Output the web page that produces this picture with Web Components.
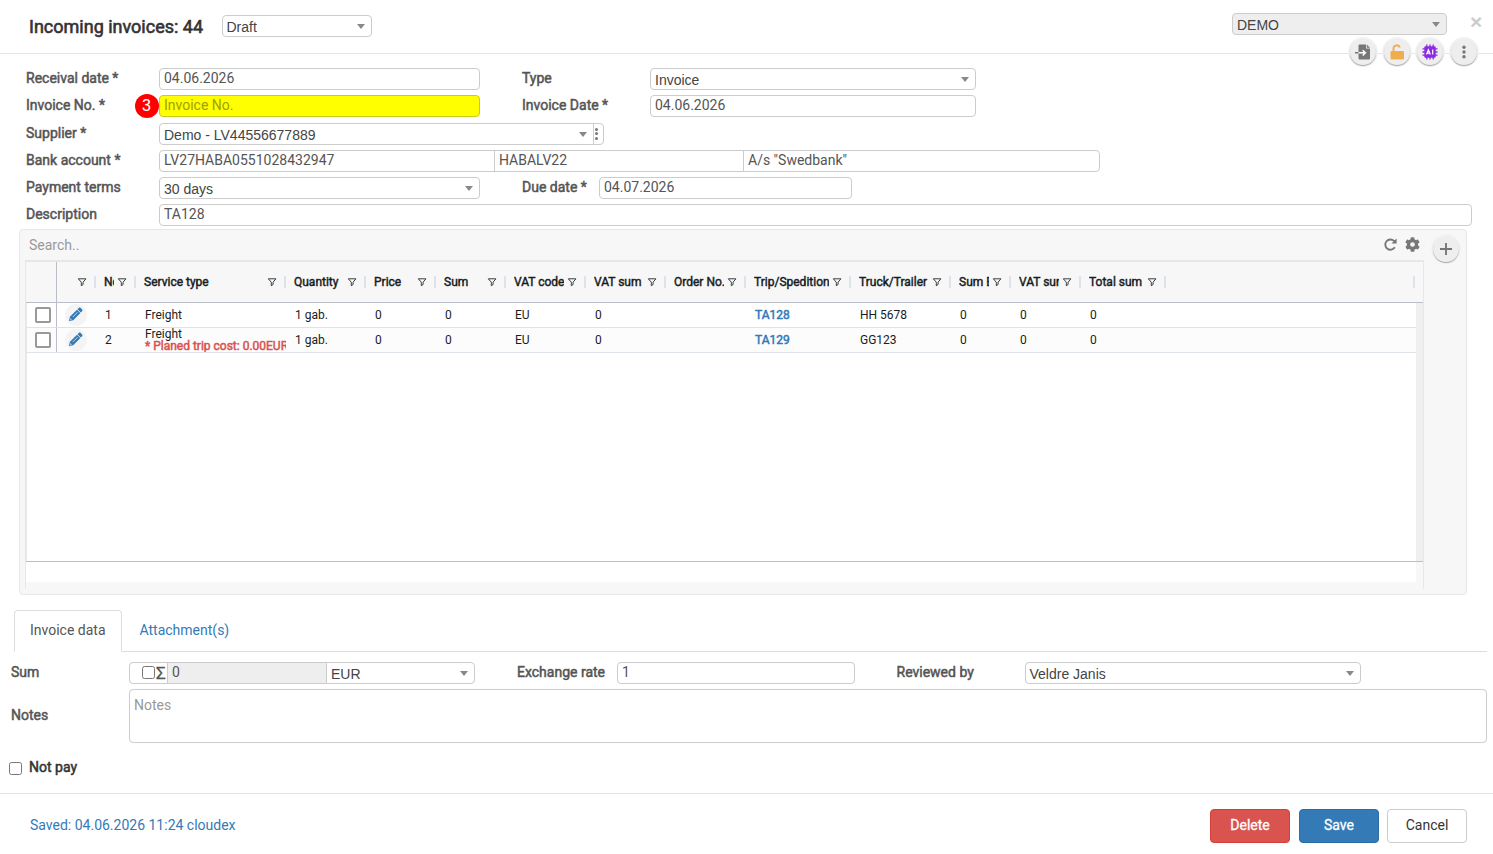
<!DOCTYPE html>
<html lang="en">
<head>
<meta charset="utf-8">
<title>Incoming invoices</title>
<style>
    body{
        margin: 0;
        background: #fff;
        color: #555;
        font: 14px/20px Roboto, "Liberation Sans", sans-serif;
    }
</style>
</head>
<body>
<invoice-page></invoice-page>

<script>
const define = (name, html, setup) => {
    customElements.define(name, class extends HTMLElement{
        constructor(){
            super();
            this.$ = this.attachShadow({mode: 'open'});
            this.$.innerHTML = html;
        }

        connectedCallback(){
            if(setup) setup(this, this.$)
        }
    })
}

const icons = {
    import: ['0 0 18 18', `<path fill="#777" d="M5.500 1.500H12V5.500h4V15.500a1 1 0 0 1-1 1H5.500a1 1 0 0 1-1-1v-13a1 1 0 0 1 1-1z"/><path fill="#777" d="M12.800 1.500l3.200 3.200h-3.200zM1 9.100h4v1.500H1z"/><path fill="none" stroke="#fff" stroke-width="1.500" d="M4.500 9.850h6.500M8.700 7.200l2.700 2.650-2.700 2.650"/>`],
    unlock: ['0 0 18 18', `<rect x="2.500" y="8" width="13.500" height="8.500" rx="1.300" fill="#f0ad4e"/><path fill="none" stroke="#f0ad4e" stroke-width="1.900" d="M5.500 9V5.600a3.300 3.300 0 0 1 6.400-1.100"/>`],
    ai: ['0 0 18 18', `<path stroke="#8a2be2" stroke-width="1.300" d="M5.800 1.500v15M9 1.500v15M12.200 1.500v15M1.500 5.800h15M1.500 9h15M1.500 12.200h15"/><rect x="3.300" y="3.300" width="11.400" height="11.400" rx="1.300" fill="#8a2be2"/><path fill="none" stroke="#fff" stroke-width="1.200" d="M5.500 11.500l1.900-4.700 1.900 4.700M6.200 10.200h2.400M11.700 6.500v5"/>`],
    dots: ['0 0 18 18', `<g fill="#777"><circle cx="9" cy="4.300" r="1.700"/><circle cx="9" cy="9" r="1.700"/><circle cx="9" cy="13.700" r="1.700"/></g>`],
    plus: ['0 0 18 18', `<path stroke="#777" stroke-width="1.900" d="M9 3v12M3 9h12"/>`],
    refresh: ['0 0 16 16', `<path fill="none" stroke="#777" stroke-width="2" d="M12.600 11A5.500 5.500 0 1 1 11.800 4.200L13 5.400"/><path fill="#777" d="M14.500 1.500v5.500H9z"/>`],
    gear: ['0 0 512 512', `<path fill="#777" d="M487 315l-43-25a192 192 0 0 0 0-69l43-25c5-3 7-9 6-14a250 250 0 0 0-55-95c-4-4-10-5-15-2l-43 24a190 190 0 0 0-60-34V26c0-6-4-11-10-12a250 250 0 0 0-110 0c-5 1-9 6-9 12v50a195 195 0 0 0-60 34L89 85c-5-3-11-2-15 2a249 249 0 0 0-55 95c-2 5 1 11 5 14l43 25a194 194 0 0 0 0 69l-43 25c-4 3-7 9-5 14a250 250 0 0 0 55 95c4 4 10 5 15 2l43-24a190 190 0 0 0 60 34v50c0 6 4 11 9 12a251 251 0 0 0 110 0c6-1 10-6 10-12v-50a195 195 0 0 0 60-34l43 25c5 2 11 2 15-3a249 249 0 0 0 55-95c1-5-1-11-7-14zM256 336a80 80 0 1 1 0-160 80 80 0 0 1 0 160z"/>`],
    pencil: ['0 0 16 16', `<path fill="#337ab7" d="M1 15l1-4.600 7.600-7.600 3.600 3.600L5.600 14z"/><path fill="#337ab7" d="M10.100 2.300l1.300-1.300c.7-.6 1.500-.5 2.100.1l1.400 1.400c.6.6.7 1.500.1 2.100l-1.300 1.300z"/><path stroke="#fff" stroke-width=".7" d="M5 10.800l5.200-5.200"/><path fill="#fff" d="M2.700 11.900l1.400 1.400-1.200.4-.6-.6z"/>`],
    filter: ['0 0 10 10', `<path fill="none" stroke="#181d1f" stroke-width=".85" d="M1.300 1.800h7.600L6.100 5.200v2.300L4.300 8.700V5.200z"/>`]
}

define('app-icon', `
    <style>
        :host{ display: block; width: 18px; height: 18px; flex: none; }
        svg{ display: block; width: 100%; height: 100%; }
    </style>
    <svg></svg>
`, (el, $) => {
    const [box, body] = icons[el.getAttribute('name')]
    const svg = $.querySelector('svg')
    svg.setAttribute('viewBox', box)
    svg.innerHTML = body
})

define('field-label', `
    <style>
        :host{
            display: block;
            line-height: 20px;
            white-space: nowrap;
            -webkit-text-stroke: .5px currentColor;
        }
    </style>
    <slot></slot>
`)

define('text-field', `
    <style>
        :host{
            display: block;
            box-sizing: border-box;
            height: 22px;
            border: 1px solid #ccc;
            border-radius: 4px;
            padding: 0 4px;
            line-height: 18px;
            white-space: nowrap;
            background: #fff;
        }
        :host([yellow]){ background: #ff0; border-color: #cccc1c; color: #a0a000; }
        :host([disabled]){ background: #eee; }
        :host([area]){ height: 54px; padding-top: 6px; color: #999; }
        :host([first]){ border-radius: 4px 0 0 4px; }
        :host([mid]){ border-radius: 0; margin-left: -1px; }
        :host([last]){ border-radius: 0 4px 4px 0; margin-left: -1px; }
    </style>
    <slot></slot>
`)

define('select-field', `
    <style>
        :host{
            display: flex;
            box-sizing: border-box;
            height: 22px;
            border: 1px solid #ccc;
            border-radius: 4px;
            padding: 1px 6px 0 4px;
            align-items: center;
            justify-content: space-between;
            font: 14px/20px "Liberation Sans", Arial, sans-serif;
            color: #444;
            background: #fff;
            white-space: nowrap;
        }
        :host([disabled]){ background: #eee; }
        :host([first]){ border-radius: 4px 0 0 4px; }
        :host([last]){ border-radius: 0 4px 4px 0; margin-left: -1px; }
        i{
            border: 4px solid transparent;
            border-top: 5px solid #888;
            border-bottom: 0;
            margin-bottom: 1px;
        }
    </style>
    <span><slot></slot></span><i></i>
`)

define('check-box', `
    <style>
        :host{
            display: block;
            box-sizing: border-box;
            flex: none;
            width: 13px;
            height: 13px;
            border: 1px solid #767676;
            border-radius: 2.5px;
            background: #fff;
        }
        :host([large]){ width: 16px; height: 16px; border: 2px solid #999; border-radius: 2px; }
    </style>
`)

define('round-button', `
    <style>
        :host{
            display: flex;
            width: 26px;
            height: 26px;
            border-radius: 50%;
            align-items: center;
            justify-content: center;
            background: #eee;
            box-shadow: 0 1px 1px rgba(0,0,0,.3), 0 0 0 2px #f2f2f2;
        }
    </style>
    <slot></slot>
`)

define('push-button', `
    <style>
        :host{
            display: block;
            box-sizing: border-box;
            width: 80px;
            height: 34px;
            border: 1px solid #ccc;
            border-radius: 4px;
            line-height: 31px;
            text-align: center;
            color: #333;
            background: #fff;
        }
        :host([kind]){ color: #fff; -webkit-text-stroke: .3px #fff; }
        :host([kind=danger]){ background: #d9534f; border-color: #d43f3a; }
        :host([kind=primary]){ background: #337ab7; border-color: #2e6da4; }
    </style>
    <slot></slot>
`)

// [title, width, row values]
const columns = [
    ['', 39, ['edit', 'edit']],
    ['No.', 40, ['1', '2']],
    ['Service type', 150, ['Freight', 'Freight']],
    ['Quantity', 80, ['1 gab.', '1 gab.']],
    ['Price', 70, ['0', '0']],
    ['Sum', 70, ['0', '0']],
    ['VAT code', 80, ['EU', 'EU']],
    ['VAT sum', 80, ['0', '0']],
    ['Order No.', 80, ['', '']],
    ['Trip/Spedition', 105, ['TA128', 'TA129']],
    ['Truck/Trailer', 100, ['HH 5678', 'GG123']],
    ['Sum EUR', 60, ['0', '0']],
    ['VAT sum EUR', 70, ['0', '0']],
    ['Total sum', 85, ['0', '0']]
]

define('invoice-grid', `
    <style>
        :host{
            display: block;
            box-sizing: border-box;
            width: 1399px;
            height: 329px;
            border-top: 2px solid #e7e7e7;
            border-left: 1px solid #e7e7e7;
            border-right: 1px solid #e7e7e7;
            font-size: 12px;
            color: #181d1f;
        }
        .head, .row{ display: flex; box-sizing: border-box; }
        .head{ height: 41px; border-bottom: 1px solid #babfc7; align-items: center; }
        .pin{
            box-sizing: border-box;
            width: 31px;
            padding-left: 3px;
            align-self: stretch;
            border-right: 1px solid #babfc7;
            display: flex;
            align-items: center;
            justify-content: center;
            flex: none;
        }
        .th{
            box-sizing: border-box;
            display: flex;
            align-items: center;
            height: 12px;
            padding: 0 7px 0 8px;
            border-right: 2px solid #dde2eb;
            flex: none;
        }
        .th span{
            flex: 1;
            overflow: hidden;
            white-space: nowrap;
            line-height: 18px;
            -webkit-text-stroke: .45px currentColor;
        }
        .th app-icon{ width: 10px; height: 10px; margin-left: 3px; }
        .end{ width: 249px; padding: 0; }
        .body{ display: flex; box-sizing: border-box; height: 258px; background: #efefef; border-left: 1px solid #e7e7e7; }
        .rows{ width: 1389px; background: #fff; }
        .row{ height: 25px; border-bottom: 1px solid #dde2eb; }
        .row .pin{ width: 30px; padding-left: 3px; }
        .row:nth-child(even){ background: #fcfcfc; }
        .td{
            box-sizing: border-box;
            padding-left: 9px;
            line-height: 24px;
            white-space: nowrap;
            overflow: hidden;
            flex: none;
        }
        .td.edit{ padding: 1px 0 0 8px; }
        .edit div{
            display: flex;
            align-items: center;
            justify-content: center;
            width: 22px;
            height: 22px;
            border-radius: 50%;
            background: #f4f4f4;
        }
        .edit app-icon{ width: 15px; height: 15px; margin: 0 1px 1px 0; }
        .link{ color: #337ab7; -webkit-text-stroke: .5px currentColor; }
        .two{ line-height: 12px; }
        .two b{ display: block; font-weight: 400; color: #d9534f; -webkit-text-stroke: .5px currentColor; }
        .total{ width: 1390px; height: 20px; background: #fff; }
        .line{ height: 1px; background: #babfc7; }
    </style>
    <div class="head"><div class="pin"></div></div>
    <div class="body"><div class="rows"></div></div>
    <div class="line"></div>
    <div class="total"></div>
`, (el, $) => {
    const cell = (title, width, value, i) => {
        if(value === 'edit') return `<div class="td edit" style="width:${width}px"><div><app-icon name="pencil"></app-icon></div></div>`
        if(title === 'Service type' && i === 1) return `<div class="td two" style="width:${width}px">${value}<b>* Planed trip cost: 0.00EUR</b></div>`
        return `<div class="td ${title.startsWith('Trip') ? 'link' : ''}" style="width:${width}px">${value}</div>`
    }

    $.querySelector('.head').innerHTML += columns.map(([title, width]) =>
        `<div class="th" style="width:${width}px"><span>${title}</span><app-icon name="filter"></app-icon></div>`
    ).join('') + '<div class="th end"></div>'

    $.querySelector('.rows').innerHTML = [0, 1].map(i => `
        <div class="row">
            <div class="pin"><check-box large></check-box></div>
            ${columns.map(([title, width, values]) => cell(title, width, values[i], i)).join('')}
        </div>`
    ).join('')
})

define('grid-panel', `
    <style>
        :host{
            display: flex;
            box-sizing: border-box;
            width: 1448px;
            height: 366px;
            margin: 3px 0 0 19px;
            border: 1px solid #e7e7e7;
            border-radius: 4px;
            background: #f7f7f7;
        }
        .main{ padding-left: 5px; width: 1399px; }
        .bar{ display: flex; align-items: center; height: 30px; padding: 0 4px 0 4px; color: #999; }
        .bar span{ flex: 1; }
        .bar app-icon{ width: 15px; height: 15px; margin: 0 0 1px 7px; }
        round-button{ margin: 6px 0 0 9px; }
    </style>
    <div class="main">
        <div class="bar"><span>Search..</span><app-icon name="refresh"></app-icon><app-icon name="gear"></app-icon></div>
        <invoice-grid></invoice-grid>
    </div>
    <round-button><app-icon name="plus"></app-icon></round-button>
`)

define('tab-bar', `
    <style>
        :host{
            display: flex;
            box-sizing: border-box;
            height: 42px;
            margin: 15px 6px 0 14px;
            border-bottom: 1px solid #ddd;
            line-height: 39px;
        }
        .active{
            box-sizing: border-box;
            width: 108px;
            height: 42px;
            padding-left: 15px;
            border: 1px solid #ddd;
            border-bottom-color: #fff;
            border-radius: 4px 4px 0 0;
            background: #fff;
        }
        a{ color: #337ab7; padding: 1px 0 0 17.500px; }
    </style>
    <div class="active">Invoice data</div><a>Attachment(s)</a>
`)

define('invoice-page', `
    <style>
        :host{ display: block; height: 854px; overflow: hidden; position: relative; }
        header{
            display: flex;
            box-sizing: border-box;
            height: 54px;
            padding-left: 29px;
            border-bottom: 1px solid #e5e5e5;
        }
        h4{
            margin: 17px 0 0;
            width: 193px;
            font-size: 18px;
            font-weight: 400;
            line-height: 20px;
            color: #333;
            -webkit-text-stroke: .6px #333;
        }
        .status{ width: 150px; margin-top: 15px; }
        .company{ width: 215px; margin: 13px 0 0 860px; }
        .close{
            margin: 12px 0 0 23px;
            font: bold 21px/20px "Liberation Sans", sans-serif;
            color: #ccc;
        }
        .actions{ position: absolute; top: 39px; left: 1350px; display: flex; gap: 7.700px; }
        .row{ display: flex; height: 22px; margin-bottom: 5px; }
        .form{ padding: 14px 0 0 26px; }
        .form .row > :first-child{ width: 133px; }
        .second{ margin-left: 42px; width: 128px; }
        .no{ position: relative; }
        .badge{
            position: absolute;
            left: 108.500px;
            top: -1px;
            width: 24px;
            height: 24px;
            border-radius: 50%;
            background: #f00;
            color: #fff;
            text-align: center;
            font: 16px/24px "Liberation Sans", sans-serif;
        }
        .more{
            box-sizing: border-box;
            width: 11px;
            height: 22px;
            margin-left: -1px;
            border: 1px solid #ccc;
            border-radius: 0 4px 4px 0;
            display: flex;
            flex-direction: column;
            align-items: center;
            justify-content: center;
            gap: 1.500px;
            padding: 0 4px 1px 0;
        }
        .more i{ width: 3px; height: 3px; border-radius: 50%; background: #777; }
        .data{ padding: 10px 0 0 11px; }
        .data .row > :first-child{ width: 118px; }
        .sigma{
            box-sizing: border-box;
            display: flex;
            align-items: center;
            width: 39px;
            height: 22px;
            border: 1px solid #ccc;
            border-radius: 4px 0 0 4px;
            padding-left: 12px;
            gap: 1px;
            font-size: 17px;
            -webkit-text-stroke: .3px #555;
        }
        .sigma check-box{ margin-bottom: 1px; }
        .pay{ display: flex; align-items: center; gap: 7px; padding-left: 9px; margin-top: 14px; color: #333; }
        .pay check-box{ margin-top: 2px; }
        footer{
            display: flex;
            box-sizing: border-box;
            height: 61px;
            margin-top: 16px;
            padding: 15px 26px 0 30px;
            border-top: 1px solid #e5e5e5;
        }
        footer span{ flex: 1; line-height: 32px; color: #337ab7; }
    </style>
    <header>
        <h4>Incoming invoices: 44</h4>
        <select-field class="status" style="padding-left:3.500px">Draft</select-field>
        <select-field class="company" disabled>DEMO</select-field>
        <div class="close">×</div>
    </header>
    <div class="actions">
        <round-button><app-icon name="import"></app-icon></round-button>
        <round-button><app-icon name="unlock"></app-icon></round-button>
        <round-button><app-icon name="ai"></app-icon></round-button>
        <round-button><app-icon name="dots"></app-icon></round-button>
    </div>
    <div class="form">
        <div class="row">
            <field-label>Receival date *</field-label>
            <text-field style="width:321px">04.06.2026</text-field>
            <field-label class="second">Type</field-label>
            <select-field style="width:326px">Invoice</select-field>
        </div>
        <div class="row no" style="margin-bottom:6px">
            <field-label>Invoice No. *</field-label>
            <text-field yellow style="width:321px">Invoice No.</text-field>
            <field-label class="second">Invoice Date *</field-label>
            <text-field style="width:326px">04.06.2026</text-field>
            <div class="badge">3</div>
        </div>
        <div class="row">
            <field-label>Supplier *</field-label>
            <select-field first style="width:435px">Demo - LV44556677889</select-field>
            <div class="more"><i></i><i></i><i></i></div>
        </div>
        <div class="row">
            <field-label>Bank account *</field-label>
            <text-field first style="width:336px">LV27HABA0551028432947</text-field>
            <text-field mid style="width:250px">HABALV22</text-field>
            <text-field last style="width:357px">A/s "Swedbank"</text-field>
        </div>
        <div class="row">
            <field-label>Payment terms</field-label>
            <select-field style="width:321px">30 days</select-field>
            <field-label class="second" style="width:77px">Due date *</field-label>
            <text-field style="width:253px">04.07.2026</text-field>
        </div>
        <div class="row" style="margin:0">
            <field-label>Description</field-label>
            <text-field style="width:1313px">TA128</text-field>
        </div>
    </div>
    <grid-panel></grid-panel>
    <tab-bar></tab-bar>
    <div class="data">
        <div class="row">
            <field-label>Sum</field-label>
            <div class="sigma"><check-box></check-box>Σ</div>
            <text-field mid disabled style="width:160px">0</text-field>
            <select-field last style="width:149px">EUR</select-field>
            <field-label style="margin-left:42px; width:100px">Exchange rate</field-label>
            <text-field style="width:238px">1</text-field>
            <field-label style="margin-left:41.500px; width:128.500px">Reviewed by</field-label>
            <select-field style="width:336px; padding-left:3.500px">Veldre Janis</select-field>
        </div>
        <div class="row" style="height:54px; margin:0">
            <field-label style="margin-top:16px">Notes</field-label>
            <text-field area style="width:1358px">Notes</text-field>
        </div>
    </div>
    <div class="pay"><check-box></check-box><field-label>Not pay</field-label></div>
    <footer>
        <span>Saved: 04.06.2026 11:24 cloudex</span>
        <push-button kind="danger">Delete</push-button>
        <push-button kind="primary" style="margin:0 8px 0 9px">Save</push-button>
        <push-button>Cancel</push-button>
    </footer>
`)
</script>
</body>
</html>
